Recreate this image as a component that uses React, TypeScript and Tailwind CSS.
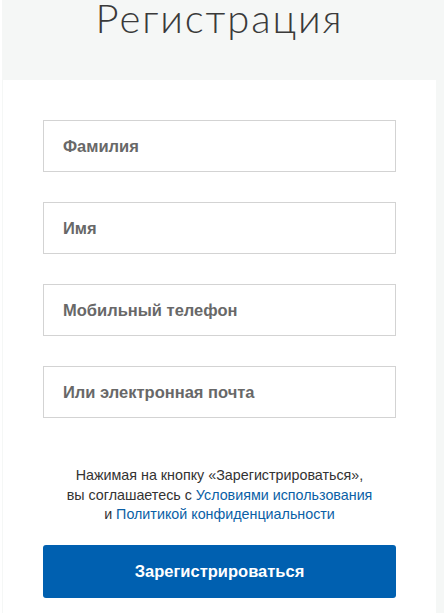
import React from "react";

const fields = ["Фамилия", "Имя", "Мобильный телефон", "Или электронная почта"];

export default function App() {
  return (
    <div className="w-[446px] h-[616px] bg-white overflow-hidden" style={{ fontFamily: '"Liberation Sans", Arial, sans-serif' }}>
      <div className="mx-[2px] w-[442px] h-[613px] bg-[#f5f7f6] pl-[1px] pr-[8px] flex flex-col">
        <div className="h-[80px] flex justify-center">
          <h1
            className="text-[40px] leading-[36px] font-light text-[#3a3a3a] tracking-[1.9px] whitespace-nowrap"
            style={{ fontFamily: 'Lato, "Open Sans", sans-serif' }}
          >
            Регистрация
          </h1>
        </div>
        <div className="flex-1 bg-white px-[40px] pt-[40px] flex flex-col">
          <div className="flex flex-col gap-[30px]">
            {fields.map((f) => (
              <div
                key={f}
                className="h-[52px] border border-[#d3d3d3] flex items-center pl-[19px] text-[16.5px] font-bold text-[#686868]"
              >
                {f}
              </div>
            ))}
          </div>
          <p className="mt-[48px] text-center text-[14.3px] leading-[19.5px] text-[#333333]">
            Нажимая на кнопку «Зарегистрироваться»,
            <br />
            вы соглашаетесь с <span className="text-[#0a5fa6]">Условиями использования</span>
            <br />
            и <span className="text-[#0a5fa6]">Политикой конфиденциальности</span>
          </p>
          <button className="mt-[20px] h-[53px] w-full rounded-[3px] bg-[#0060b0] text-white text-[16.5px] font-bold">
            Зарегистрироваться
          </button>
        </div>
      </div>
    </div>
  );
}
